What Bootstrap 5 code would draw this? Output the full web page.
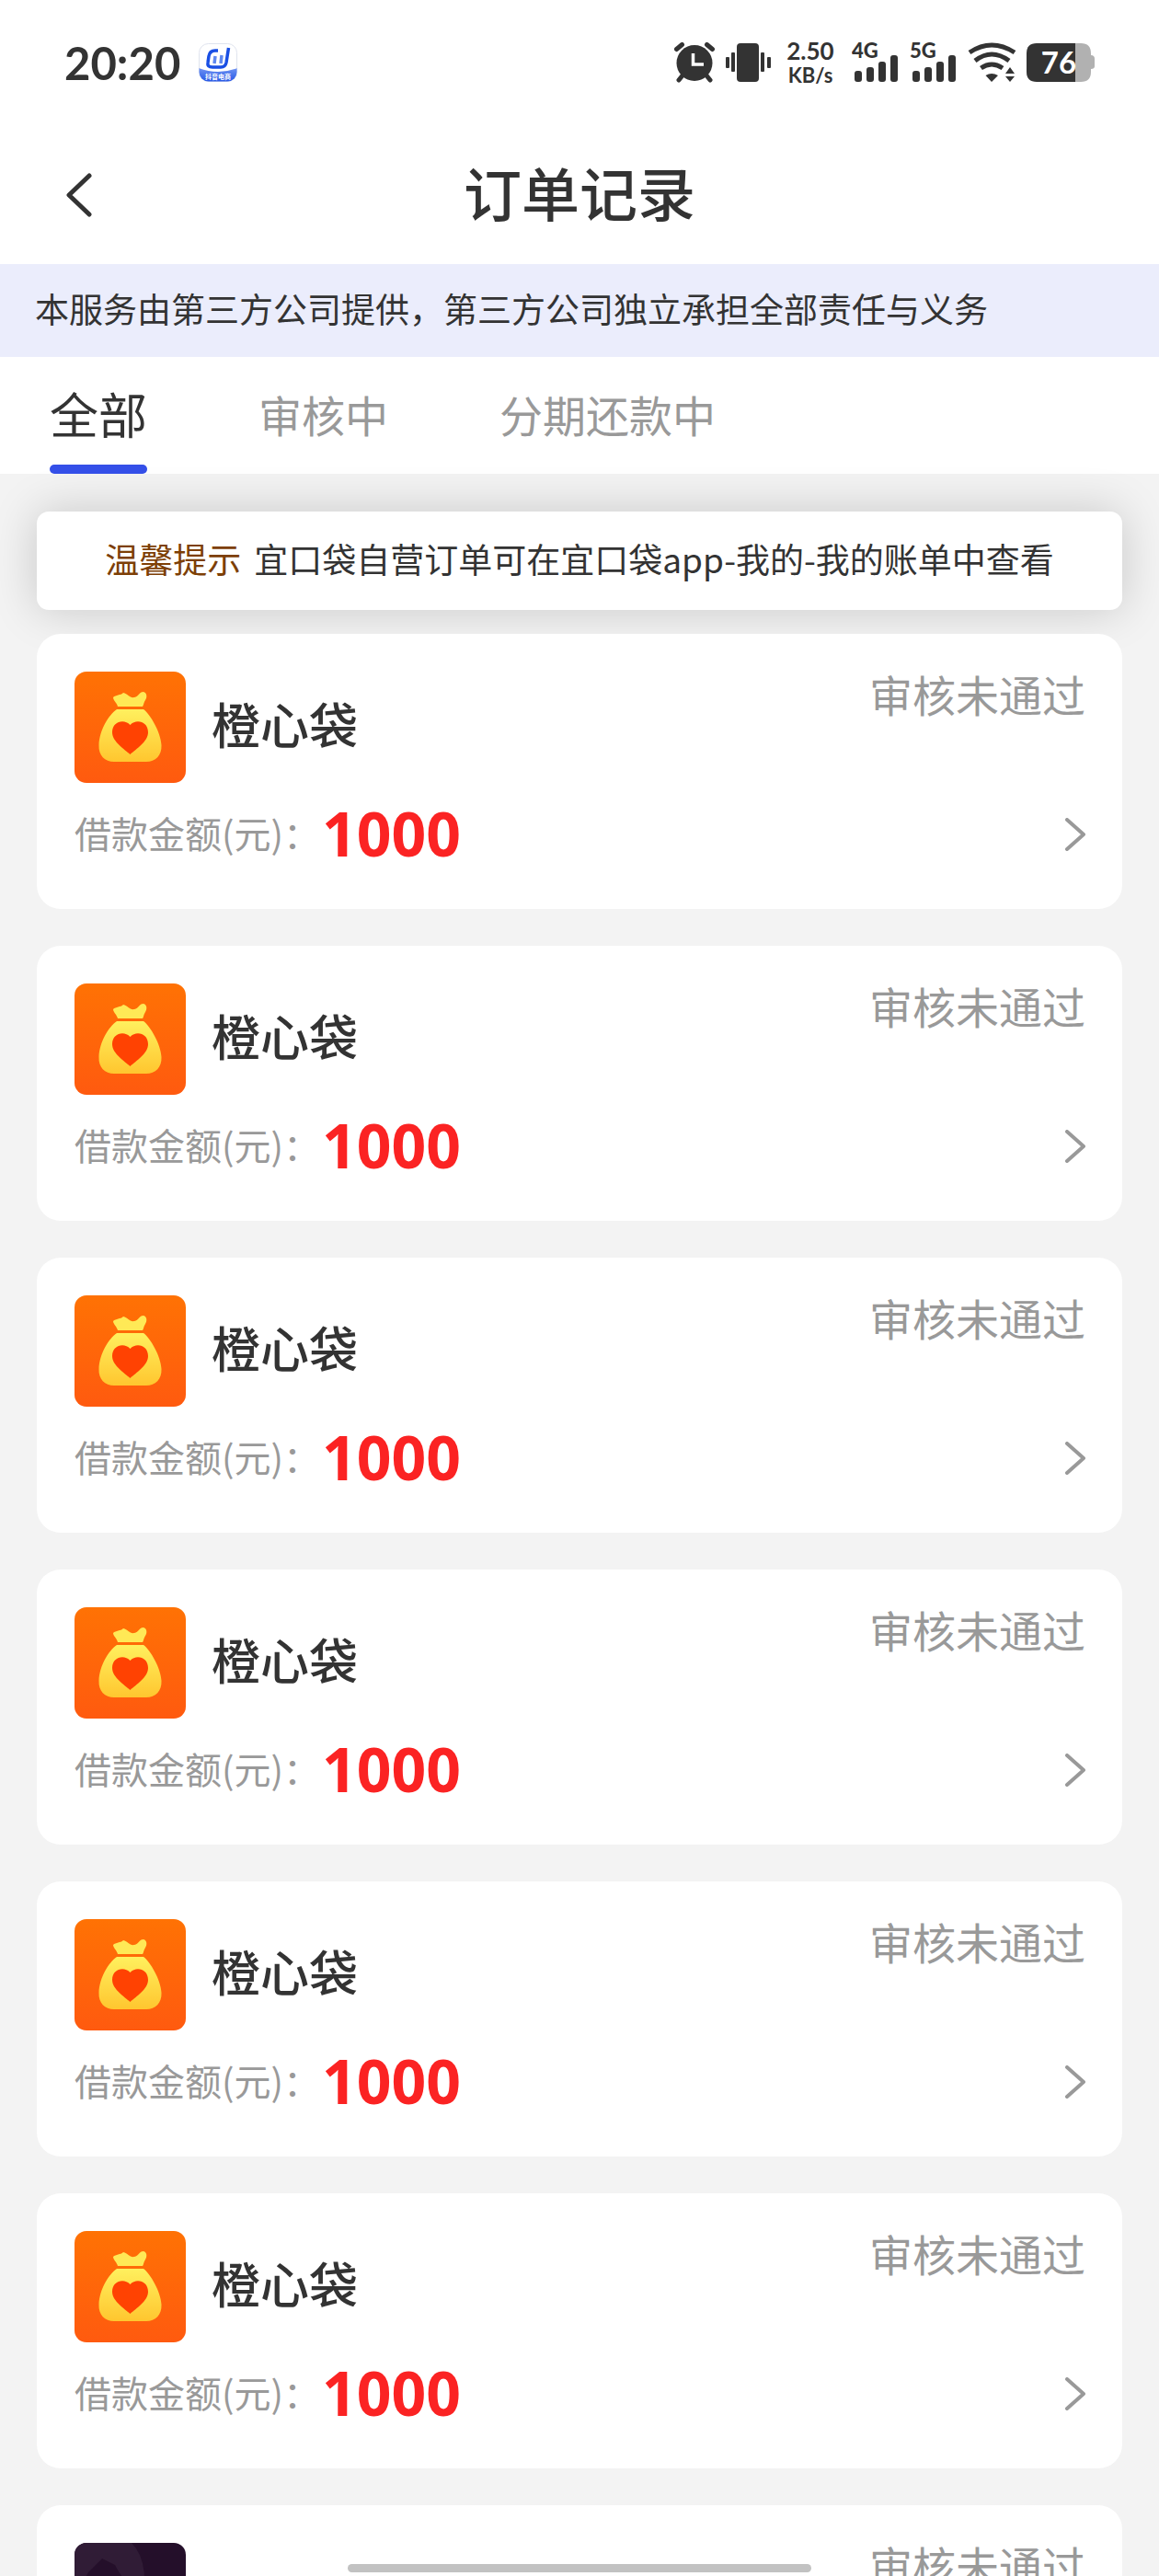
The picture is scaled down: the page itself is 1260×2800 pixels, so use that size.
<!DOCTYPE html>
<html lang="zh-CN">
<head>
<meta charset="utf-8">
<meta name="viewport" content="width=device-width, initial-scale=1">
<title>订单记录</title>
<link href="https://cdn.jsdelivr.net/npm/bootstrap@5.3.0/dist/css/bootstrap.min.css" rel="stylesheet">
<style>
  body { font-family: "Noto Sans CJK SC", sans-serif; color: #333; background: #f3f3f3; line-height: 1; }
  svg { display: block; flex: none; }
  .status-bar { height: 136px; padding: 0 70px 0 70px; }
  .clock { font: 700 49px/49px Lato, sans-serif; margin-right: 20px; }
  .status-icons { gap: 11px; }
  .net-text { font-family: Lato, sans-serif; font-weight: 700; fill: #333; }
  .net-gen { font-family: Lato, sans-serif; font-weight: 900; fill: #333; }
  .nav-head { height: 151px; padding: 0 64px; }
  .back-btn { border: 0; background: none; padding: 0; width: 48px; height: 64px; }
  .head-title { font-size: 63px; line-height: 63px; font-weight: 500; padding-bottom: 8px; }
  .third-notice { height: 101px; padding: 0 38px 4px; background: #ebedfc; font-size: 37px; }
  .order-tabs { height: 127px; padding: 0 54px; gap: 121px; }
  .order-tabs .nav-link { padding: 0; height: 127px; font-size: 47px; line-height: 123px; color: #999; }
  .order-tabs .nav-link.active { position: relative; font-size: 53px; color: #333; }
  .order-tabs .nav-link.active::after { content: ""; position: absolute; left: 0; right: 0; bottom: 0; height: 10px; border-radius: 5px; background: #344fe8; }
  .order-area { padding: 41px 40px 0; }
  .tip-box { height: 107px; padding-bottom: 4px; border-radius: 13px; font-size: 37px; gap: 14px; box-shadow: 0 0 50px rgba(0, 0, 0, .18); }
  .tip-label { color: #7d3f06; }
  .order-list { margin-top: 26px; gap: 40px; position: relative; }
  .order-card { border: 0; border-radius: 26px; padding: 41px 40px 42px 41px; color: inherit; }
  .shop-name { font-size: 53px; line-height: 53px; font-weight: 500; margin-left: 28px; padding-bottom: 8px; }
  .order-state { font-size: 47px; line-height: 48px; color: #999; }
  .amount-row { height: 71px; margin: 20px 0 4px; }
  .amount-label { font-size: 40px; color: #999; padding-bottom: 4px; margin-right: 2px; }
  .amount-num { font: 700 66px/66px "Noto Sans", sans-serif; color: #fb2323; padding-bottom: 4px; }
  .home-bar { position: fixed; left: 30%; right: 30%; bottom: 4px; height: 9px; border-radius: 5px; background: #c2c2c2; }
</style>
</head>
<body class="vh-100 overflow-hidden">

<svg width="0" height="0" class="position-absolute" aria-hidden="true">
  <defs>
    <linearGradient id="bagBg" x1="0" y1="0" x2="0" y2="1"><stop offset="0" stop-color="#ff7204"/><stop offset="1" stop-color="#ff5a0f"/></linearGradient>
    <linearGradient id="bagGold" x1="0" y1="0" x2="0" y2="1"><stop offset="0" stop-color="#fff05e"/><stop offset="1" stop-color="#ffc62f"/></linearGradient>
    <symbol id="bag" viewBox="0 0 121 121">
      <rect width="121" height="121" rx="13" fill="url(#bagBg)"/>
      <path d="M42 28C45 25 50 26 53 23C58 24 60 29 65 28C70 27 70 22 75 22C79 23 79 28 77 31C75 34 75 37 74 38H47C46 34 42 31 42 28Z" fill="#ffe956"/>
      <path d="M46 41H75C82 46 94 66 94.500 80C95 91 88 98 78 98H43C33 98 26 91 26.500 80C27 64 37 47 46 41Z" fill="url(#bagGold)"/>
      <path d="M60.500 90C54 84 41 76 41 66C41 54 54 51 60.500 58C67 51 80 54 80 66C80 76 67 84 60.500 90Z" fill="#ff4202"/>
    </symbol>
    <symbol id="chev" viewBox="0 0 24 36"><path d="M4 2L22 18L4 34" fill="none" stroke="#999" stroke-width="4" stroke-linecap="round" stroke-linejoin="round"/></symbol>
  </defs>
</svg>

<div class="bg-white">
  <div class="status-bar d-flex align-items-center">
    <span class="clock">20:20</span>
    <svg width="42" height="42" viewBox="0 0 42 42" aria-hidden="true">
      <defs>
        <clipPath id="appClip"><rect x=".5" y=".5" width="41" height="41" rx="10"/></clipPath>
        <linearGradient id="appBlue" x1="0" y1="0" x2="0" y2="1"><stop offset="0" stop-color="#6f93f2"/><stop offset="1" stop-color="#2456e6"/></linearGradient>
      </defs>
      <rect x=".5" y=".5" width="41" height="41" rx="10" fill="#fff" stroke="#dfe3ee"/>
      <path d="M0 27Q21 35 42 27V42H0Z" fill="url(#appBlue)" clip-path="url(#appClip)"/>
      <path d="M21 8H18Q12 8 11 14L10 21Q9 26 15 26H24Q29 26 30 21L32.500 5" fill="none" stroke="#1a4fe4" stroke-width="3.500"/>
      <path d="M18 14L17 22M25 13L24 22" stroke="#5f88f0" stroke-width="3.500"/>
      <text x="21" y="39" text-anchor="middle" font-size="7" font-weight="700" fill="#fff">抖音电商</text>
    </svg>
    <div class="status-icons d-flex align-items-center ms-auto">
      <svg width="45" height="44" viewBox="0 0 45 44" aria-label="闹钟" role="img">
        <g stroke="#333" stroke-width="5" stroke-linecap="round"><path d="M9 36L5 41M35 36L39 41M2.500 7.500L8.500 2.500M41.500 7.500L35.500 2.500" /></g>
        <circle cx="22" cy="22.500" r="19.500" fill="#333"/>
        <path d="M20.500 12V24H32" fill="none" stroke="#fff" stroke-width="3.500"/>
      </svg>
      <svg width="49" height="44" viewBox="0 0 49 44" fill="#333" aria-label="振动" role="img">
        <rect x="12" y="1" width="24" height="42" rx="4"/><rect y="16" width="4" height="12" rx="1"/><rect x="6" y="11" width="4" height="21" rx="1"/><rect x="38" y="11" width="4" height="21" rx="1"/><rect x="45" y="16" width="4" height="12" rx="1"/>
      </svg>
      <svg width="66" height="64" viewBox="0 -10 66 64" aria-label="网速" role="img">
        <text class="net-text" x="32" y="19" font-size="26" text-anchor="middle">2.50</text>
        <text class="net-text" x="32" y="44" font-size="22" text-anchor="middle">KB/s</text>
      </svg>
      <svg width="52" height="64" viewBox="0 -10 52 64" fill="#333" aria-label="4G信号" role="img">
        <text class="net-gen" x="0" y="17" font-size="22">4G</text>
        <rect x="3" y="31" width="8" height="12" rx="3"/><rect x="16" y="27" width="8" height="16" rx="3"/><rect x="29" y="21" width="8" height="22" rx="3"/><rect x="42" y="14" width="8" height="29" rx="3"/>
      </svg>
      <svg width="52" height="64" viewBox="0 -10 52 64" fill="#333" aria-label="5G信号" role="img">
        <text class="net-gen" x="0" y="17" font-size="22">5G</text>
        <rect x="3" y="31" width="8" height="12" rx="3"/><rect x="16" y="27" width="8" height="16" rx="3"/><rect x="29" y="21" width="8" height="22" rx="3"/><rect x="42" y="14" width="8" height="29" rx="3"/>
      </svg>
      <svg width="53" height="44" viewBox="0 0 53 44" aria-label="无线网络" role="img">
        <g fill="none" stroke="#333" stroke-width="5"><path d="M2 11Q26 -5 51 11"/><path d="M8 20Q26 6 45 20"/><path d="M14.500 28Q26 20 38 28"/></g>
        <path d="M19.500 36Q26 32 33 36L26 43ZM46 27L51 34H41ZM46 43L51 37H41Z" fill="#333"/>
      </svg>
      <svg width="74" height="44" viewBox="0 0 74 44" aria-label="电量" role="img">
        <path d="M52 1H59Q70 1 70 12V14Q74 14 74 18V26Q74 29 70 29V32Q70 43 59 43H52Z" fill="#b1b1b1"/>
        <path d="M53 1H11Q0 1 0 12V32Q0 43 11 43H53Z" fill="#333"/>
        <text x="35" y="34" font-family="Lato, sans-serif" font-weight="700" font-size="33" text-anchor="middle" fill="#fff">76</text>
      </svg>
    </div>
  </div>

  <header class="nav-head d-flex align-items-center justify-content-between">
    <button class="back-btn" type="button" aria-label="返回">
      <svg width="36" height="56" viewBox="0 0 36 56" aria-hidden="true"><path d="M33 7L11 28L33 49" fill="none" stroke="#333" stroke-width="5" stroke-linecap="round" stroke-linejoin="round"/></svg>
    </button>
    <h1 class="head-title m-0">订单记录</h1>
    <span class="back-btn"></span>
  </header>

  <div class="third-notice d-flex align-items-center">本服务由第三方公司提供，第三方公司独立承担全部责任与义务</div>

  <nav class="order-tabs nav flex-nowrap">
    <a class="nav-link active" href="#" aria-current="page">全部</a>
    <a class="nav-link" href="#">审核中</a>
    <a class="nav-link" href="#">分期还款中</a>
  </nav>
</div>

<main class="order-area">
  <div class="tip-box bg-white d-flex align-items-center justify-content-center"><span class="tip-label">温馨提示</span><span>宜口袋自营订单可在宜口袋app-我的-我的账单中查看</span></div>

  <div class="order-list d-flex flex-column">
    <article class="order-card card">
      <div class="d-flex align-items-center"><svg width="121" height="121"><use href="#bag"/></svg><h2 class="shop-name mb-0">橙心袋</h2><span class="order-state ms-auto align-self-start">审核未通过</span></div>
      <div class="amount-row d-flex align-items-center"><span class="amount-label">借款金额(元)：</span><strong class="amount-num">1000</strong><a class="ms-auto" href="#" aria-label="查看订单"><svg width="24" height="36"><use href="#chev"/></svg></a></div>
    </article>
    <article class="order-card card">
      <div class="d-flex align-items-center"><svg width="121" height="121"><use href="#bag"/></svg><h2 class="shop-name mb-0">橙心袋</h2><span class="order-state ms-auto align-self-start">审核未通过</span></div>
      <div class="amount-row d-flex align-items-center"><span class="amount-label">借款金额(元)：</span><strong class="amount-num">1000</strong><a class="ms-auto" href="#" aria-label="查看订单"><svg width="24" height="36"><use href="#chev"/></svg></a></div>
    </article>
    <article class="order-card card">
      <div class="d-flex align-items-center"><svg width="121" height="121"><use href="#bag"/></svg><h2 class="shop-name mb-0">橙心袋</h2><span class="order-state ms-auto align-self-start">审核未通过</span></div>
      <div class="amount-row d-flex align-items-center"><span class="amount-label">借款金额(元)：</span><strong class="amount-num">1000</strong><a class="ms-auto" href="#" aria-label="查看订单"><svg width="24" height="36"><use href="#chev"/></svg></a></div>
    </article>
    <article class="order-card card">
      <div class="d-flex align-items-center"><svg width="121" height="121"><use href="#bag"/></svg><h2 class="shop-name mb-0">橙心袋</h2><span class="order-state ms-auto align-self-start">审核未通过</span></div>
      <div class="amount-row d-flex align-items-center"><span class="amount-label">借款金额(元)：</span><strong class="amount-num">1000</strong><a class="ms-auto" href="#" aria-label="查看订单"><svg width="24" height="36"><use href="#chev"/></svg></a></div>
    </article>
    <article class="order-card card">
      <div class="d-flex align-items-center"><svg width="121" height="121"><use href="#bag"/></svg><h2 class="shop-name mb-0">橙心袋</h2><span class="order-state ms-auto align-self-start">审核未通过</span></div>
      <div class="amount-row d-flex align-items-center"><span class="amount-label">借款金额(元)：</span><strong class="amount-num">1000</strong><a class="ms-auto" href="#" aria-label="查看订单"><svg width="24" height="36"><use href="#chev"/></svg></a></div>
    </article>
    <article class="order-card card">
      <div class="d-flex align-items-center"><svg width="121" height="121"><use href="#bag"/></svg><h2 class="shop-name mb-0">橙心袋</h2><span class="order-state ms-auto align-self-start">审核未通过</span></div>
      <div class="amount-row d-flex align-items-center"><span class="amount-label">借款金额(元)：</span><strong class="amount-num">1000</strong><a class="ms-auto" href="#" aria-label="查看订单"><svg width="24" height="36"><use href="#chev"/></svg></a></div>
    </article>
    <article class="order-card card">
      <div class="d-flex align-items-center">
        <svg width="121" height="121" viewBox="0 0 121 121" aria-hidden="true">
          <clipPath id="lastClip"><rect width="121" height="121" rx="13"/></clipPath>
          <g clip-path="url(#lastClip)"><rect width="121" height="121" fill="#240f2a"/><path d="M0 0H62Q76 14 76 40V121H62V50Q50 36 44 24L30 17L15 32L0 60Z" fill="#301c36"/></g>
        </svg>
        <span class="order-state ms-auto align-self-start">审核未通过</span>
      </div>
    </article>
  </div>
</main>

<div class="home-bar"></div>
<script src="https://cdn.jsdelivr.net/npm/bootstrap@5.3.0/dist/js/bootstrap.bundle.min.js"></script>
</body>
</html>
